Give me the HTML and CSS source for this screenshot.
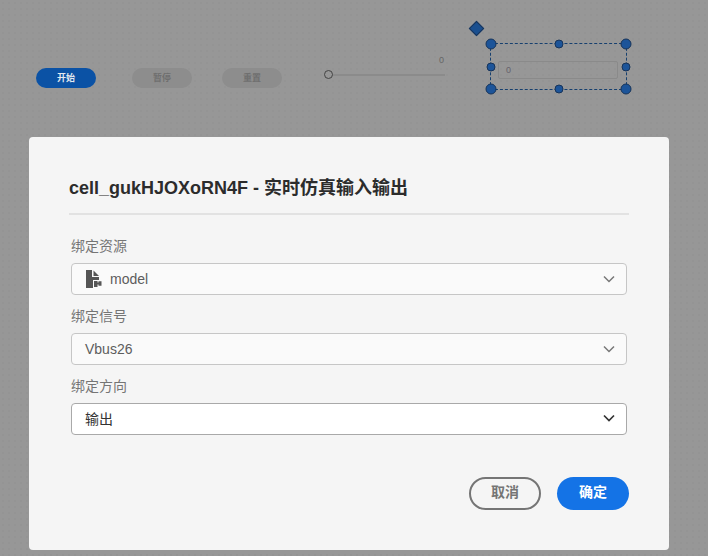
FILE: index.html

```html
<!DOCTYPE html>
<html lang="zh-CN">
<head>
  <meta charset="UTF-8">
  <title>cell_gukHJOXoRN4F - 实时仿真输入输出</title>
  <link rel="stylesheet" href="styles.css">
</head>
<body>

  <div class="canvas">
    <button class="pill pill-start">开始</button>
    <button class="pill pill-pause">暂停</button>
    <button class="pill pill-reset">重置</button>

    <div class="slider-track"></div>
    <div class="slider-knob"></div>
    <div class="slider-value">0</div>

    <div class="rotate-handle"></div>
    <div class="selection">
      <div class="num-input">0</div>
      <span class="handle big h-tl"></span>
      <span class="handle h-tm"></span>
      <span class="handle big h-tr"></span>
      <span class="handle h-ml"></span>
      <span class="handle h-mr"></span>
      <span class="handle big h-bl"></span>
      <span class="handle h-bm"></span>
      <span class="handle big h-br"></span>
    </div>
  </div>

  <div class="modal">
    <h2 class="modal-title">cell_gukHJOXoRN4F - 实时仿真输入输出</h2>

    <div class="field">
      <label>绑定资源</label>
      <div class="select disabled">
        <svg class="file-icon" width="16" height="18" viewBox="0 0 16 18">
          <path d="M0 0h6v7h7v3H7v8H0z" fill="#555"/>
          <path d="M7.5 .5l5.5 5.5H7.5z" fill="#555"/>
          <path d="M8 11h3.5v1.5h1v-1.2h3v4.4h-3v-1.2h-1V17H8z" fill="#555"/>
        </svg>
        <span>model</span>
        <svg class="chevron" width="12" height="8" viewBox="0 0 12 8"><path d="M1 1.5l5 5 5-5" fill="none" stroke="#777" stroke-width="1.5"/></svg>
      </div>
    </div>

    <div class="field">
      <label>绑定信号</label>
      <div class="select disabled">
        <span>Vbus26</span>
        <svg class="chevron" width="12" height="8" viewBox="0 0 12 8"><path d="M1 1.5l5 5 5-5" fill="none" stroke="#777" stroke-width="1.5"/></svg>
      </div>
    </div>

    <div class="field">
      <label>绑定方向</label>
      <div class="select active">
        <span>输出</span>
        <svg class="chevron" width="12" height="8" viewBox="0 0 12 8"><path d="M1 1.5l5 5 5-5" fill="none" stroke="#333" stroke-width="1.7"/></svg>
      </div>
    </div>

    <div class="modal-footer">
      <button class="btn btn-cancel">取消</button>
      <button class="btn btn-ok">确定</button>
    </div>
  </div>

</body>
</html>
```

FILE: styles.css

```css
html, body {
  margin: 0;
  height: 100%;
  overflow: hidden;
}
body {
  font-family: "Liberation Sans", "Noto Sans CJK SC", sans-serif;
  background-color: #979797;
  background-image: radial-gradient(circle, #949494 1px, transparent 1.2px);
  background-size: 6px 6px;
  color: #333;
}
button {
  font-family: inherit;
  border: none;
  padding: 0;
}

/* canvas behind the dialog */
.canvas {
  position: absolute;
  top: 0;
  left: 0;
  width: 708px;
  height: 137px;
}
.pill {
  position: absolute;
  top: 68px;
  width: 60px;
  height: 20px;
  padding-bottom: 2px;
  border-radius: 10px;
  font-size: 9px;
  font-weight: bold;
  text-align: center;
}
.pill-start {
  left: 36px;
  background: #0b52a5;
  color: #e4e9f0;
}
.pill-pause {
  left: 132px;
  background: #8d8d8d;
  color: #6f6f6f;
}
.pill-reset {
  left: 222px;
  background: #8d8d8d;
  color: #6f6f6f;
}
.slider-track {
  position: absolute;
  left: 332px;
  top: 74px;
  width: 113px;
  height: 2px;
  background: #8b8b8b;
}
.slider-knob {
  position: absolute;
  left: 324px;
  top: 70px;
  width: 7px;
  height: 7px;
  border: 1.5px solid #444;
  border-radius: 50%;
  background: #979797;
}
.slider-value {
  position: absolute;
  left: 439px;
  top: 55px;
  font-size: 9px;
  line-height: 11px;
  color: #666;
}
.rotate-handle {
  position: absolute;
  left: 471px;
  top: 23px;
  width: 9px;
  height: 9px;
  background: #1a4f8f;
  border: 1px solid #17345a;
  transform: rotate(45deg);
}
.selection {
  position: absolute;
  left: 490px;
  top: 43px;
  width: 135px;
  height: 45px;
  border: 1px dashed #17406f;
}
.num-input {
  position: absolute;
  left: 7px;
  top: 17px;
  width: 111px;
  height: 16px;
  padding-left: 7px;
  border: 1px solid #8a8a8a;
  border-radius: 2px;
  font-size: 9px;
  line-height: 17px;
  color: #66626c;
}
.handle {
  position: absolute;
  width: 7px;
  height: 7px;
  border: 1px solid #17345a;
  border-radius: 50%;
  background: #1c5499;
  transform: translate(-50%, -50%);
}
.handle.big {
  width: 9px;
  height: 9px;
}
.h-tl { left: 0; top: 0; }
.h-tm { left: 50%; top: 0; }
.h-tr { left: 100%; top: 0; }
.h-ml { left: 0; top: 50%; }
.h-mr { left: 100%; top: 50%; }
.h-bl { left: 0; top: 100%; }
.h-bm { left: 50%; top: 100%; }
.h-br { left: 100%; top: 100%; }

/* dialog */
.modal {
  position: absolute;
  left: 29px;
  top: 137px;
  width: 640px;
  height: 413px;
  box-sizing: border-box;
  padding: 40px 40px 0;
  background: #f5f5f5;
  border-radius: 4px;
}
.modal-title {
  margin: 0 0 21px;
  padding-bottom: 13px;
  border-bottom: 2px solid #e2e2e2;
  font-size: 18px;
  line-height: 23px;
  font-weight: bold;
  color: #2c2c2c;
}
.field {
  margin: 0 2px 11px;
}
.field label {
  display: block;
  font-size: 14px;
  line-height: 20px;
  margin-bottom: 7px;
  color: #757575;
}
.select {
  display: flex;
  align-items: center;
  height: 32px;
  box-sizing: border-box;
  padding: 0 11px 0 13px;
  border: 1px solid #c6c6c6;
  border-radius: 4px;
  font-size: 14px;
}
.select.disabled {
  background: #fafafa;
  color: #5d5d5d;
}
.select.active {
  padding-bottom: 2px;
  background: #fff;
  border-color: #a9a9a9;
  color: #333;
}
.file-icon {
  margin: 0 8px 0 1px;
}
.chevron {
  margin-left: auto;
}
.modal-footer {
  display: flex;
  justify-content: flex-end;
  gap: 16px;
  margin-top: 42px;
}
.btn {
  width: 72px;
  height: 33px;
  padding-bottom: 5px;
  border-radius: 17px;
  font-size: 14px;
  font-weight: bold;
}
.btn-cancel {
  background: transparent;
  border: 2px solid #757575;
  color: #757575;
}
.btn-ok {
  background: #1473e6;
  color: #fff;
}
```
